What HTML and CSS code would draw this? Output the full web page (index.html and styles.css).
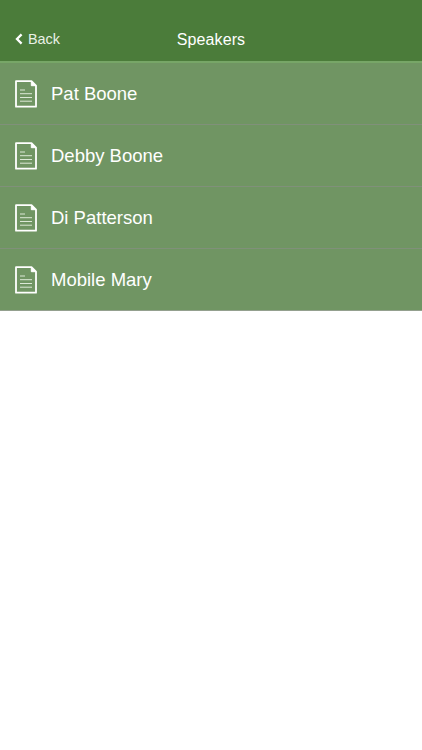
FILE: index.html
```html
<!DOCTYPE html>
<html lang="en">
<head>
  <meta charset="UTF-8">
  <meta name="viewport" content="width=device-width, initial-scale=1.0">
  <title>Speakers</title>
  <link rel="stylesheet" href="styles.css">
</head>
<body>
  <!-- shared page icon for the list rows -->
  <svg width="0" height="0" class="sprite">
    <symbol id="doc" viewBox="0 0 22 28">
      <path d="M1 1.2H16.5L21 5.7V26.7H1Z" fill="none" stroke="#fff" stroke-width="1.8" stroke-linejoin="round"/>
      <path d="M16.3 1.2L20.8 5.7H16.3Z" fill="#fff" stroke="#fff" stroke-width="1"/>
      <path d="M5 10H10M5 13.7H17M5 17.5H17M5 21.2H17" stroke="#dce8d7" stroke-width="1"/>
    </symbol>
  </svg>

  <header class="navbar">
    <a class="back" href="#">
      <svg class="chevron" viewBox="0 0 8 12"><path d="M6.6 1.4L2 6L6.6 10.6" fill="none" stroke="#fff" stroke-width="2.3"/></svg>
      <span>Back</span>
    </a>
    <h1>Speakers</h1>
  </header>

  <ul class="list">
    <li><svg class="icon"><use href="#doc"/></svg><span>Pat Boone</span></li>
    <li><svg class="icon"><use href="#doc"/></svg><span>Debby Boone</span></li>
    <li><svg class="icon"><use href="#doc"/></svg><span>Di Patterson</span></li>
    <li><svg class="icon"><use href="#doc"/></svg><span>Mobile Mary</span></li>
  </ul>
</body>
</html>
```
FILE: styles.css
```css
body {
  margin: 0;
  background: #fff;
  color: #fff;
  font-family: "Liberation Sans", Arial, sans-serif;
}
.sprite {
  display: block;
}
.navbar {
  display: grid;
  grid-template-columns: 1fr auto 1fr;
  align-items: center;
  box-sizing: border-box;
  height: 63px;
  padding: 18px 15px 0;
  background: #4b7c3a;
  border-bottom: 2px solid #77a667;
}
.navbar h1 {
  margin: 0;
  font-size: 16px;
  font-weight: normal;
  line-height: 20px;
  letter-spacing: 0.1px;
}
.back {
  display: flex;
  align-items: center;
  gap: 5px;
  padding-bottom: 1px;
  color: #e9f1e6;
  font-size: 14.4px;
  line-height: 20px;
  text-decoration: none;
}
.chevron {
  width: 8px;
  height: 12px;
}
.list {
  margin: 0;
  padding: 0;
  list-style: none;
}
.list li {
  display: flex;
  align-items: center;
  gap: 14px;
  box-sizing: border-box;
  height: 62px;
  padding-left: 15px;
  background: #709563;
  border-bottom: 1px solid #80907a;
  font-size: 18.5px;
}
.list li:last-child {
  border-bottom-color: #94a08f;
}
.icon {
  width: 22px;
  height: 28px;
}
```
